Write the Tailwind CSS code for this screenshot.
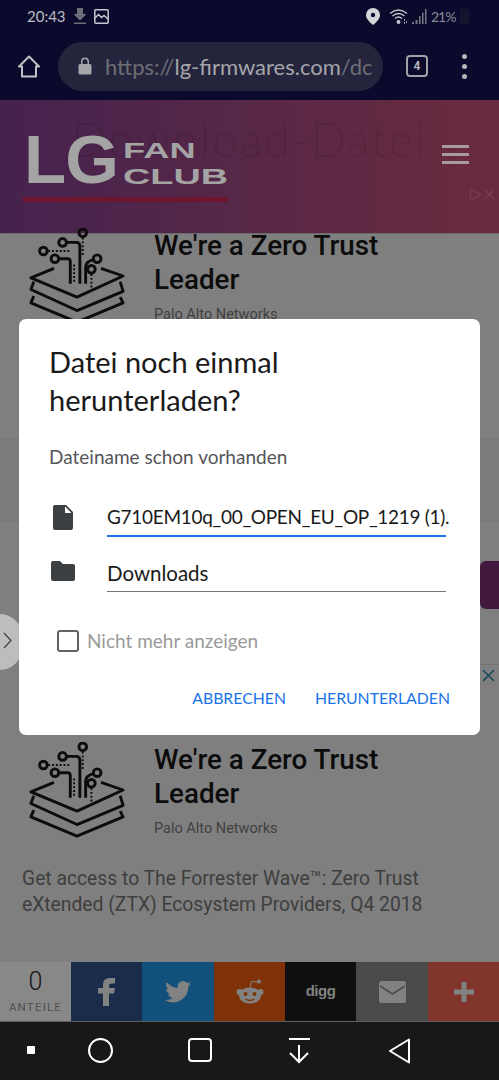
<!DOCTYPE html>
<html lang="de">
<head>
    <meta charset="UTF-8">
    <meta name="viewport" content="width=device-width, initial-scale=1.0">
    <title>Datei noch einmal herunterladen?</title>
    <script src="https://cdn.jsdelivr.net/npm/@tailwindcss/browser@4"></script>
</head>
<body class="bg-[#7f7f7f] font-['Roboto',sans-serif]">
    <svg class="hidden">
        <symbol id="layers" viewBox="0 0 100 100" fill="none" stroke="#0c0c0c" stroke-width="3" stroke-linejoin="round">
            <path d="M26 42 2 52l48 20 48-22-23-8"/>
            <path d="M5 56 2 64l48 22 48-20-3-10"/>
            <path d="M5 71 2 78l48 20 48-20-3-6"/>
            <circle cx="56" cy="5" r="4"/><circle cx="35" cy="15" r="4"/><circle cx="15" cy="24" r="4"/>
            <circle cx="27" cy="32" r="4"/><circle cx="71" cy="32" r="4"/><circle cx="65" cy="43" r="4"/>
            <path d="M39 15h10q4 0 4 4v39M31 32h9q3 0 3 3v23M67 33q-8 2-8 8v17"/>
            <path d="M20 24h24M56 10v18M47 38v20M65 48v14" stroke-width="2" stroke-dasharray="2 2"/>
        </symbol>
    </svg>
    <div class="relative w-[499px] h-[1080px] overflow-hidden flex flex-col">
        <!-- status bar -->
        <div class="h-[37px] bg-[#0b0a2c] flex items-center justify-between pl-[27px] pr-[30px] pb-[5px] text-[#bcbcc6] shrink-0">
            <div class="flex items-center">
                <span class="text-[15px] font-['Lato',sans-serif]">20:43</span>
                <svg class="ml-[7px]" width="14" height="16" viewBox="0 0 14 16" fill="#6f6f7c"><path d="M4 0h6v6h3.500L7 12.500.5 6H4zM1 14.500h12V16H1z"/></svg>
                <svg class="ml-[7px]" width="15" height="15" viewBox="0 0 15 15" fill="none" stroke="#c8c8d0" stroke-width="1.500"><rect x=".8" y=".8" width="13.400" height="13.400" rx="1"/><path d="m1 9 3.500-3.500 3 3 2.500-2 4 3.500"/></svg>
            </div>
            <div class="flex items-center">
                <svg width="14" height="17" viewBox="0 0 14 17"><path fill="#d5d5dc" d="M7 0a7 7 0 0 1 7 7c0 4-4 7.500-7 10-3-2.500-7-6-7-10a7 7 0 0 1 7-7z"/><circle cx="7" cy="7" r="2.200" fill="#0b0a2c"/></svg>
                <svg class="ml-[9px]" width="19" height="16" viewBox="0 0 19 16" fill="none" stroke="#c8c8d0" stroke-width="1.300"><path d="M1 5.500q8.500-7 17 0M3.500 8q6-5 12 0M6 10.500q3.500-3 7 0"/><circle cx="9.500" cy="14" r="1.300" fill="#c8c8d0"/><path d="M15 12h1M17 14h1M15 15h1"/></svg>
                <svg class="ml-[4px]" width="15" height="15" viewBox="0 0 15 15" fill="#777784"><path d="M0 13h2v2H0zM3.500 11h2v4h-2zM7 7h1.500v8H7zM10 3.500h1.500V15H10zM13 0h1.500v15H13z"/></svg>
                <span class="ml-[4px] w-[23px] text-[14px] tracking-[-1px] text-[#8b8b98] font-['Lato',sans-serif]">21%</span>
                <div class="ml-[6px] w-[9px] h-[15px] bg-[#15142f]"></div>
            </div>
        </div>

        <!-- browser toolbar -->
        <div class="h-[63px] bg-[#0b0a2c] flex items-center pl-[18px] pb-[5px] shrink-0">
            <svg width="22" height="23" viewBox="0 0 22 23" fill="none" stroke="#c2c2c8" stroke-width="2" stroke-linejoin="round"><path d="M11 1.500 1 11.500h3V21.500h14V11.500h3z"/></svg>
            <div class="ml-[18px] w-[325px] h-[49px] rounded-full bg-[#24243d] flex items-center pl-[20px] pr-[10px] overflow-hidden">
                <svg width="14" height="18" viewBox="0 0 14 18" class="shrink-0"><path fill="#a5a5ab" d="M2 7h1V4.500a4 4 0 0 1 8 0V7h1a1.500 1.500 0 0 1 1.500 1.500V16a1.500 1.500 0 0 1-1.500 1.500H2A1.500 1.500 0 0 1 .5 16V8.500A1.500 1.500 0 0 1 2 7zm2.500 0h5V4.500a2.500 2.500 0 0 0-5 0z"/></svg>
                <div class="ml-[13px] text-[22px] whitespace-nowrap font-['Lato',sans-serif] text-[#8c8c92]"><span class="text-[#6e6e74]">https://</span><span class="text-[#a6a6aa]">lg-firmwares.com</span><span class="text-[#6e6e74]">/dc</span></div>
            </div>
            <div class="ml-[23px] w-[22px] h-[22px] border-2 border-[#a0a0a6] rounded-[4px] flex items-center justify-center text-[12px] font-bold text-[#b5b5ba]">4</div>
            <div class="ml-[34px] flex flex-col gap-[5px]">
                <span class="w-[5px] h-[5px] rounded-full bg-[#b5b5ba]"></span>
                <span class="w-[5px] h-[5px] rounded-full bg-[#b5b5ba]"></span>
                <span class="w-[5px] h-[5px] rounded-full bg-[#b5b5ba]"></span>
            </div>
        </div>

        <!-- site header -->
        <div class="relative h-[133px] bg-gradient-to-r from-[#45224e] to-[#6b2b3e] shrink-0">
            <div class="absolute left-[71px] top-[11px] text-[46.500px] leading-[56px] font-light tracking-[1.8px] font-['Lato',sans-serif] text-black/10 whitespace-nowrap">Download-Datei</div>
            <div class="relative ml-[24px] pt-[22px] flex items-start">
                <span class="text-[69px] leading-[76px] font-bold text-[#a4a4a4] font-['Liberation_Sans',sans-serif] tracking-[-1px]">LG</span>
                <div class="ml-[5px] mt-[16px] text-[#a4a4a4] font-bold font-['Liberation_Sans',sans-serif]">
                    <div class="text-[22px] leading-[26px] origin-left scale-x-[1.65]">FAN</div>
                    <div class="text-[22px] leading-[26px] origin-left scale-x-[1.72]">CLUB</div>
                </div>
            </div>
            <div class="absolute left-[23px] top-[97px] w-[205px] h-[5px] bg-[#6e1530]"></div>
            <div class="absolute right-[30px] top-[45px] w-[27px] flex flex-col gap-[5px]">
                <span class="h-[3px] bg-[#a89aa0]"></span><span class="h-[3px] bg-[#a89aa0]"></span><span class="h-[3px] bg-[#a89aa0]"></span>
            </div>
            <div class="absolute right-[4px] top-[88px] flex items-center gap-[2px] text-[#74404f]">
                <svg width="13" height="13" viewBox="0 0 13 13" fill="none" stroke="currentColor" stroke-width="1.200"><path d="M1.500 1v11l10-5.500z"/></svg>
                <svg width="11" height="11" viewBox="0 0 11 11" stroke="currentColor" stroke-width="1.200"><path d="m1 1 9 9M10 1l-9 9"/></svg>
            </div>
        </div>

        <!-- page behind the dialog -->
        <div class="relative flex-1 border-t border-[#6a6a6a]">
            <div class="pl-[27px] flex h-[204px]">
                <svg class="w-[100px] h-[96px] mt-[-6px] shrink-0"><use href="#layers"/></svg>
                <div class="ml-[27px] mt-[-5px]">
                    <div class="text-[27.800px] leading-[34px] font-medium text-[#0c0c0c] w-[260px]">We're a Zero Trust Leader</div>
                    <div class="mt-[8px] text-[14.500px] leading-[20px] text-[#3f3f3f]">Palo Alto Networks</div>
                </div>
            </div>
            <div class="h-[83px] bg-[#7c7c7c] border-t border-[#757575]"></div>
            <div class="h-[143px] bg-[#7f7f7f] border-t border-[#757575]"></div>
            <div class="h-[84px] border-t border-[#757575] bg-[#7f7f7f]"></div>
            <div class="pl-[27px] flex">
                <svg class="w-[100px] h-[96px] mt-[-6px] shrink-0"><use href="#layers"/></svg>
                <div class="ml-[27px] mt-[-5px]">
                    <div class="text-[27.800px] leading-[34px] font-medium text-[#0c0c0c] w-[260px]">We're a Zero Trust Leader</div>
                    <div class="mt-[8px] text-[14.500px] leading-[20px] text-[#3f3f3f]">Palo Alto Networks</div>
                </div>
            </div>
            <div class="mt-[27px] pl-[22px] text-[19.300px] leading-[26px] text-[#3e3e3e] whitespace-nowrap">Get access to The Forrester Wave™: Zero Trust<br>eXtended (ZTX) Ecosystem Providers, Q4 2018</div>

            <svg class="absolute right-[4px] top-[435px] text-[#17495f]" width="13" height="13" viewBox="0 0 13 13" stroke="currentColor" stroke-width="1.600"><path d="m1 1 11 11M12 1 1 12"/></svg>
            <div class="absolute right-0 top-[327px] w-[19px] h-[48px] bg-[#41193f] rounded-l-[6px]"></div>
            <div class="absolute left-[-22px] top-[380px] w-[44px] h-[56px] rounded-full bg-[#bdbdbd]"></div>
        </div>

        <!-- share bar -->
        <div class="h-[59px] flex shrink-0 bg-[#8d8d8d]">
            <div class="w-[71px] flex flex-col items-center bg-[#888888]">
                <span class="text-[25px] leading-[28px] mt-[6px] text-[#151515] font-light">0</span>
                <span class="text-[11.500px] leading-[14px] tracking-[1.200px] mt-[4px] text-[#505050]">ANTEILE</span>
            </div>
            <div class="w-[71px] bg-[#1a2c4a] flex items-center justify-center">
                <svg width="17" height="28" viewBox="0 0 17 28" fill="#828282"><path d="M5 28V15.500H0V10h5V7c0-4.500 2.500-7 7-7h5v5.500h-3c-2 0-3 .8-3 2.500v2h6l-1 5.500h-5V28z"/></svg>
            </div>
            <div class="w-[72px] bg-[#10507a] flex items-center justify-center">
                <svg width="26" height="24" viewBox="0 0 24 20" fill="#828282"><path d="M24 2.400c-.9.400-1.800.700-2.800.800 1-.6 1.800-1.500 2.200-2.700-1 .6-2 1-3.100 1.200A4.900 4.900 0 0 0 11.900 6.200C7.800 6 4.200 4 1.700.9c-1.300 2.200-.7 5.100 1.500 6.600-.8 0-1.600-.2-2.200-.6 0 2.300 1.600 4.400 3.900 4.900-.7.200-1.500.2-2.200.1.600 2 2.500 3.400 4.600 3.400A9.900 9.900 0 0 1 0 17.300 14 14 0 0 0 21.500 4.900c1-.7 1.800-1.500 2.500-2.500z"/></svg>
            </div>
            <div class="w-[71px] bg-[#7f3208] flex items-center justify-center">
                <svg width="28" height="26" viewBox="0 0 28 26"><g fill="#828282"><ellipse cx="14" cy="16.500" rx="11" ry="8"/><circle cx="3.500" cy="13" r="3"/><circle cx="24.500" cy="13" r="3"/><circle cx="23" cy="2.500" r="2"/></g><path d="M14 9l1.500-6.500 7 .5" fill="none" stroke="#828282" stroke-width="1"/><circle cx="9.500" cy="15" r="2" fill="#7f3208"/><circle cx="18.500" cy="15" r="2" fill="#7f3208"/><path d="M9.500 20q4.500 3 9 0" fill="none" stroke="#7f3208" stroke-width="1.300"/></svg>
            </div>
            <div class="w-[71px] bg-[#0f0f0f] flex items-center justify-center text-[15px] tracking-[-0.5px] font-bold text-[#828282] font-['Liberation_Sans',sans-serif]">digg</div>
            <div class="w-[72px] bg-[#4a4a4a] flex items-center justify-center">
                <svg width="27" height="22" viewBox="0 0 27 22"><rect width="27" height="22" rx="2.500" fill="#828282"/><path d="m1 5 12.500 8L26 5" fill="none" stroke="#4a4a4a" stroke-width="1.500"/></svg>
            </div>
            <div class="flex-1 bg-[#7f352c] flex items-center justify-center">
                <svg width="20" height="20" viewBox="0 0 20 20" fill="#828282"><path d="M7.500 0h5v7.500H20v5h-7.500V20h-5v-7.500H0v-5h7.500z"/></svg>
            </div>
        </div>

        <!-- android nav bar -->
        <div class="h-[59px] bg-[#181818] relative shrink-0 border-t border-[#5e5e5e]">
            <div class="absolute left-[27px] top-[24px] w-[8px] h-[8px] bg-white rounded-[1px]"></div>
            <div class="absolute left-[88px] top-[16px] w-[25px] h-[25px] rounded-full border-2 border-white"></div>
            <div class="absolute left-[188px] top-[16px] w-[24px] h-[24px] rounded-[4px] border-2 border-white"></div>
            <svg class="absolute left-[288px] top-[16px]" width="22" height="26" viewBox="0 0 22 26" fill="none" stroke="#fff" stroke-width="2"><path d="M1 1h21M11 7v18M2 15l9 9 9-9"/></svg>
            <svg class="absolute left-[388px] top-[16px]" width="23" height="26" viewBox="0 0 23 26" fill="none" stroke="#fff" stroke-width="2" stroke-linejoin="round"><path d="M21 1.500v23L2 13z"/></svg>
        </div>

        <!-- dialog -->
        <div class="absolute left-[19px] top-[319px] w-[461px] h-[416px] bg-white rounded-[7px] font-['Lato',sans-serif]">
            <h1 class="ml-[30px] mt-[24px] text-[29px] leading-[38px] text-[#1a1a1a] w-[300px]">Datei noch einmal herunterladen?</h1>
            <p class="ml-[30px] mt-[27px] text-[19px] leading-[22px] text-[#555558]">Dateiname schon vorhanden</p>
            <div class="mt-[28px] flex items-start">
                <svg class="ml-[34px] mt-[9px] shrink-0" width="20" height="25" viewBox="0 0 20 25"><path fill="#3c4043" d="M2 0h11l7 7v16a2 2 0 0 1-2 2H2a2 2 0 0 1-2-2V2a2 2 0 0 1 2-2z"/><path fill="#fff" d="M12 1.500V8h6.500z"/></svg>
                <div class="ml-[34px] w-[339px] h-[41px] border-b-2 border-[#1a73e8] text-[19px] tracking-[-0.3px] leading-[42px] text-[#1a1a1a] whitespace-nowrap">G710EM10q_00_OPEN_EU_OP_1219 (1).</div>
            </div>
            <div class="mt-[14px] flex items-start">
                <svg class="ml-[32px] mt-[10px] shrink-0" width="24" height="20" viewBox="0 0 24 20"><path fill="#3c4043" d="M2 0h7l3 3h10a2 2 0 0 1 2 2v13a2 2 0 0 1-2 2H2a2 2 0 0 1-2-2V2a2 2 0 0 1 2-2z"/></svg>
                <div class="ml-[32px] w-[339px] h-[41px] border-b border-[#70757a] text-[20.500px] leading-[44px] text-[#1a1a1a]">Downloads</div>
            </div>
            <div class="mt-[35px] ml-[38px] flex items-center">
                <div class="w-[22px] h-[22px] border-2 border-[#5f6368] rounded-[3px]"></div>
                <span class="ml-[8px] text-[19px] text-[#9a9a9a]">Nicht mehr anzeigen</span>
            </div>
            <div class="mt-[31px] pr-[30px] flex justify-end gap-[29px] text-[15.800px] leading-[22px] text-[#1a73e8]">
                <span>ABBRECHEN</span>
                <span>HERUNTERLADEN</span>
            </div>
        </div>
        <svg class="absolute left-[3px] top-[632px]" width="9" height="17" viewBox="0 0 9 17" fill="none" stroke="#444" stroke-width="1.300"><path d="m1 1 7 7.500L1 16"/></svg>
    </div>
</body>
</html>
